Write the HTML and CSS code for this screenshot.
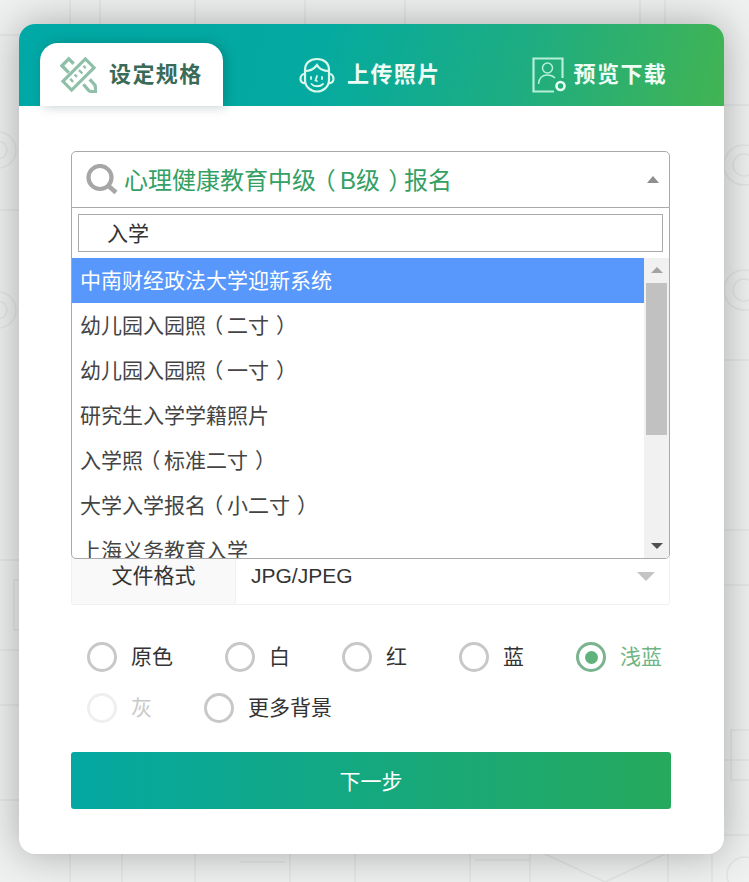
FILE: index.html
```html
<!DOCTYPE html>
<html lang="zh">
<head>
<meta charset="utf-8">
<title>设定规格</title>
<link rel="stylesheet" href="styles.css">
</head>
<body>
<svg class="backdrop" viewBox="0 0 749 882" aria-hidden="true">
  <g fill="none" stroke="#e3e4e5" stroke-width="1.500">
    <path d="M70 0V24M100 0V24M195 0V24M305 0V24M405 0V24M640 0V24M665 0V24M0 35H19M0 210H19M0 560H19M0 650H19M0 705H19M0 800H19M724 105H749M724 360H749M724 530H749M724 585H749M724 760H749M724 835H749"/>
    <circle cx="-2" cy="150" r="18"/><circle cx="-2" cy="150" r="9"/>
    <circle cx="-2" cy="310" r="18"/><circle cx="-2" cy="310" r="9"/>
    <circle cx="744" cy="165" r="20"/><circle cx="744" cy="165" r="11"/>
    <circle cx="744" cy="290" r="20"/><circle cx="744" cy="290" r="11"/>
    <path d="M70 854V882M122 854V882M195 854V882M290 854V882M355 854V882M470 854V882M530 854V882M545 854L605 882M665 854L605 882M668 854V882M712 854V882M475 860H530M240 862H285"/>
    <circle cx="745" cy="875" r="18"/>
    <rect x="731" y="730" width="30" height="50"/>
    <rect x="14" y="580" width="20" height="50"/>
  </g>
</svg>

<main class="card">
  <nav class="tabs">
    <div class="tab tab-active">
      <svg class="tab-icon" viewBox="0 0 38 38" fill="none" stroke="#8fbfa8">
        <path stroke-width="3.2" stroke-linejoin="miter" d="M26 3 35 12 12 35 3 26Z"/>
        <path stroke-width="2.400" d="M10.500 23.500 13.500 26.500M15 19 17.500 21.500M19.500 14.500 23 18M24 10 26.500 12.500"/>
        <path stroke-width="3.400" d="M9 17 2 10 9 3 14 8"/>
        <path stroke-width="3.400" d="M24 29 30 36 37 37 36 30 30.500 24"/>
      </svg>
      <span class="tab-text">设定规格</span>
    </div>
    <div class="tab tab-upload">
      <svg class="tab-icon face" viewBox="0 0 36 36" fill="none" stroke="#d9f7ea" stroke-width="2.200" stroke-linecap="round">
        <path d="M6 18V13C6 6 11 2 18 2S30 6 30 13V18"/>
        <path d="M6 14C11 14 15 12 18 8 20 12 25 14 30 14"/>
        <path d="M6 17V23C6 30 12 34.500 18 34.500S30 30 30 23V17"/>
        <path d="M5.500 17C2.500 17 1.500 20 1.500 22S3 26.500 6 26M30.500 17C33.500 17 34.500 20 34.500 22S33 26.500 30 26"/>
        <path stroke-width="1.800" d="M12 20V22M23 20V22M18 19 16.500 23.500 18 24M12.500 27C15 30 21 30 24 27"/>
      </svg>
      <span class="tab-text">上传照片</span>
    </div>
    <div class="tab tab-preview">
      <svg class="tab-icon portrait" viewBox="0 0 34 36" fill="none" stroke="#b5f0d6">
        <path stroke-width="2.200" d="M30.500 21V1.500H1.500V34.500H22"/>
        <circle cx="15.500" cy="11" r="5" stroke-width="1.500"/>
        <path stroke-width="1.500" d="M6.500 27C7 21 10.500 18 15.500 18 18.500 18 21 19 23 21"/>
        <circle cx="28.500" cy="29" r="4" stroke="#e8fff4" stroke-width="2.600"/>
      </svg>
      <span class="tab-text">预览下载</span>
    </div>
  </nav>

  <form class="form">
    <div class="picker">
      <div class="picker-head">
        <svg class="search-icon" viewBox="0 0 32 32" fill="none" stroke="#a6a6a6">
          <circle cx="14" cy="13.500" r="11.500" stroke-width="4.200"/>
          <path d="M22.500 22 30 28.500" stroke-width="4.500"/>
        </svg>
        <span class="picker-value">心理健康教育中级<span class="open">（</span>B级<span class="close">）</span>报名</span>
        <span class="caret-up"></span>
      </div>
      <div class="dropdown">
        <div class="search-row"><div class="search-box">入学</div></div>
        <div class="list-wrap">
          <ul class="list">
            <li class="item item-on">中南财经政法大学迎新系统</li>
            <li class="item">幼儿园入园照<span class="open">（</span>二寸<span class="close">）</span></li>
            <li class="item">幼儿园入园照<span class="open">（</span>一寸<span class="close">）</span></li>
            <li class="item">研究生入学学籍照片</li>
            <li class="item">入学照<span class="open">（</span>标准二寸<span class="close">）</span></li>
            <li class="item">大学入学报名<span class="open">（</span>小二寸<span class="close">）</span></li>
            <li class="item">上海义务教育入学</li>
          </ul>
          <div class="scrollbar">
            <span class="sb-up"></span>
            <span class="sb-thumb"></span>
            <span class="sb-down"></span>
          </div>
        </div>
      </div>
    </div>

    <div class="format-row">
      <div class="format-label">文件格式</div>
      <div class="format-value">JPG/JPEG</div>
      <span class="caret-down"></span>
    </div>

    <div class="radios">
      <label class="radio"><span class="dot"></span>原色</label>
      <label class="radio"><span class="dot"></span>白</label>
      <label class="radio"><span class="dot"></span>红</label>
      <label class="radio"><span class="dot"></span>蓝</label>
      <label class="radio radio-on"><span class="dot"></span>浅蓝</label>
      <label class="radio radio-off"><span class="dot"></span>灰</label>
      <label class="radio"><span class="dot"></span>更多背景</label>
    </div>

    <button class="next" type="button">下一步</button>
  </form>
</main>
</body>
</html>
```
FILE: styles.css
```css
* { box-sizing: border-box; }

html, body { margin: 0; height: 882px; overflow: hidden; }

body {
  position: relative;
  padding: 24px 25px 0 19px;
  background: #eff0f0;
  font-family: "Liberation Sans", "Noto Sans CJK SC", sans-serif;
  color: #333;
}

.backdrop {
  position: absolute;
  left: 0;
  top: 0;
  width: 749px;
  height: 882px;
}

.card {
  position: relative;
  height: 830px;
  background: #fff;
  border-radius: 16px;
  box-shadow: 0 0 40px rgba(0, 0, 0, .3);
  overflow: hidden;
}

/* tabs */
.tabs {
  display: flex;
  align-items: flex-end;
  height: 82px;
  padding-left: 21px;
  background: linear-gradient(105deg, #00a8a6 0%, #04aaa0 42%, #1fad80 72%, #42b452 100%);
}

.tab {
  display: flex;
  align-items: center;
  height: 63px;
  color: #eefcf5;
}

.tab-active {
  width: 183px;
  padding-left: 20px;
  background: #fff;
  border-radius: 18px 18px 0 0;
  box-shadow: 3px 0 12px rgba(0, 60, 60, .28);
  color: #3a6a58;
}

.tab-upload { margin-left: 76px; }
.tab-preview { margin-left: 91px; }

.tab-icon { width: 37px; height: 37px; flex: none; margin-right: 12px; }
.tab-icon.face { width: 36px; height: 36px; margin-right: 12px; }
.tab-icon.portrait { width: 34px; height: 36px; margin-right: 8px; }

.tab-text {
  font-size: 22px;
  line-height: 30px;
  font-weight: 700;
  letter-spacing: 1.4px;
}

/* form */
.form { padding: 45px 53px 0 52px; }

.picker { position: relative; height: 397px; margin-right: 1px; }

.picker-head {
  display: flex;
  align-items: center;
  height: 57px;
  padding-left: 14px;
  background: #fff;
  border: 1px solid #aaa;
  border-radius: 5px 5px 0 0;
}

.search-icon { width: 32px; height: 32px; flex: none; margin: 1px 6px 0 0; }

.picker-value {
  flex: 1;
  padding-top: 2px;
  font-size: 24px;
  line-height: 34px;
  color: #34a064;
}

/* centred fullwidth brackets: half-width glyph padded back out to one em */
.open, .close { font-feature-settings: "halt"; }
.open { padding: 0 .18em 0 .32em; }
.close { padding: 0 .16em 0 .34em; }

.caret-up {
  width: 0;
  height: 0;
  margin-right: 10px;
  border: 6px solid transparent;
  border-top: 0;
  border-bottom: 7px solid #8e8e8e;
}

.dropdown {
  position: absolute;
  left: 0;
  right: 0;
  top: 56px;
  z-index: 2;
  height: 352px;
  background: #fff;
  border: 1px solid #aaa;
  border-radius: 0 0 5px 5px;
  overflow: hidden;
}

.search-row { padding: 6px 6px 6px; }

.search-box {
  height: 38px;
  padding: 1px 0 0 28px;
  border: 1px solid #aaa;
  font-size: 21px;
  line-height: 36px;
  color: #333;
}

.list-wrap { display: flex; height: 300px; }

.list {
  flex: 1;
  margin: 0;
  padding: 0;
  list-style: none;
  overflow: hidden;
}

.item {
  height: 45px;
  padding-left: 8px;
  font-size: 21px;
  line-height: 45px;
  color: #444;
  white-space: nowrap;
}

.item-on { background: #5897fb; color: #fff; }

.scrollbar {
  position: relative;
  flex: none;
  width: 25px;
  background: #f1f1f1;
}

.sb-up, .sb-down {
  position: absolute;
  left: 7px;
  width: 0;
  height: 0;
  border: 6px solid transparent;
}

.sb-up { top: 9px; border-top: 0; border-bottom: 6px solid #a3a3a3; }
.sb-down { bottom: 9px; border-bottom: 0; border-top: 6px solid #505050; }

.sb-thumb {
  position: absolute;
  left: 2px;
  top: 25px;
  width: 21px;
  height: 152px;
  background: #c1c1c1;
}

/* file format */
.format-row {
  position: relative;
  display: flex;
  height: 57px;
  margin-right: 1px;
  border: 1px solid #f0f0f0;
  border-radius: 3px;
}

.format-label {
  width: 164px;
  background: #f9f9f9;
  border-right: 1px solid #f0f0f0;
  font-size: 21px;
  line-height: 54px;
  text-align: center;
  color: #333;
}

.format-value {
  padding-left: 15px;
  font-size: 21px;
  line-height: 54px;
  color: #333;
}

.caret-down {
  position: absolute;
  right: 14px;
  top: 23px;
  width: 0;
  height: 0;
  border: 9px solid transparent;
  border-bottom: 0;
  border-top: 9px solid #c4c4c4;
}

/* radios */
.radios {
  display: flex;
  flex-wrap: wrap;
  gap: 21px 52px;
  margin: 37px 1px 29px 0;
  padding-left: 16px;
}

.radio {
  display: flex;
  align-items: center;
  height: 30px;
  font-size: 21px;
  line-height: 32px;
  color: #333;
}

.dot {
  position: relative;
  width: 30px;
  height: 30px;
  margin-right: 14px;
  border: 3px solid #c8c8c8;
  border-radius: 50%;
}

.radio-on { color: #6db584; }
.radio-on .dot { border-color: #7ab48e; }
.radio-on .dot::after {
  content: "";
  position: absolute;
  left: 5.5px;
  top: 5.5px;
  width: 13px;
  height: 13px;
  background: #60b27c;
  border-radius: 50%;
}

.radio-off { color: #c9c9c9; }
.radio-off .dot { border-color: #efefef; }

/* button */
.next {
  display: block;
  width: 600px;
  height: 57px;
  padding: 0 0 2px;
  border: 0;
  border-radius: 3px;
  background: linear-gradient(90deg, #04a8a2, #26a95c);
  font: inherit;
  font-size: 21px;
  color: #fff;
}
```
